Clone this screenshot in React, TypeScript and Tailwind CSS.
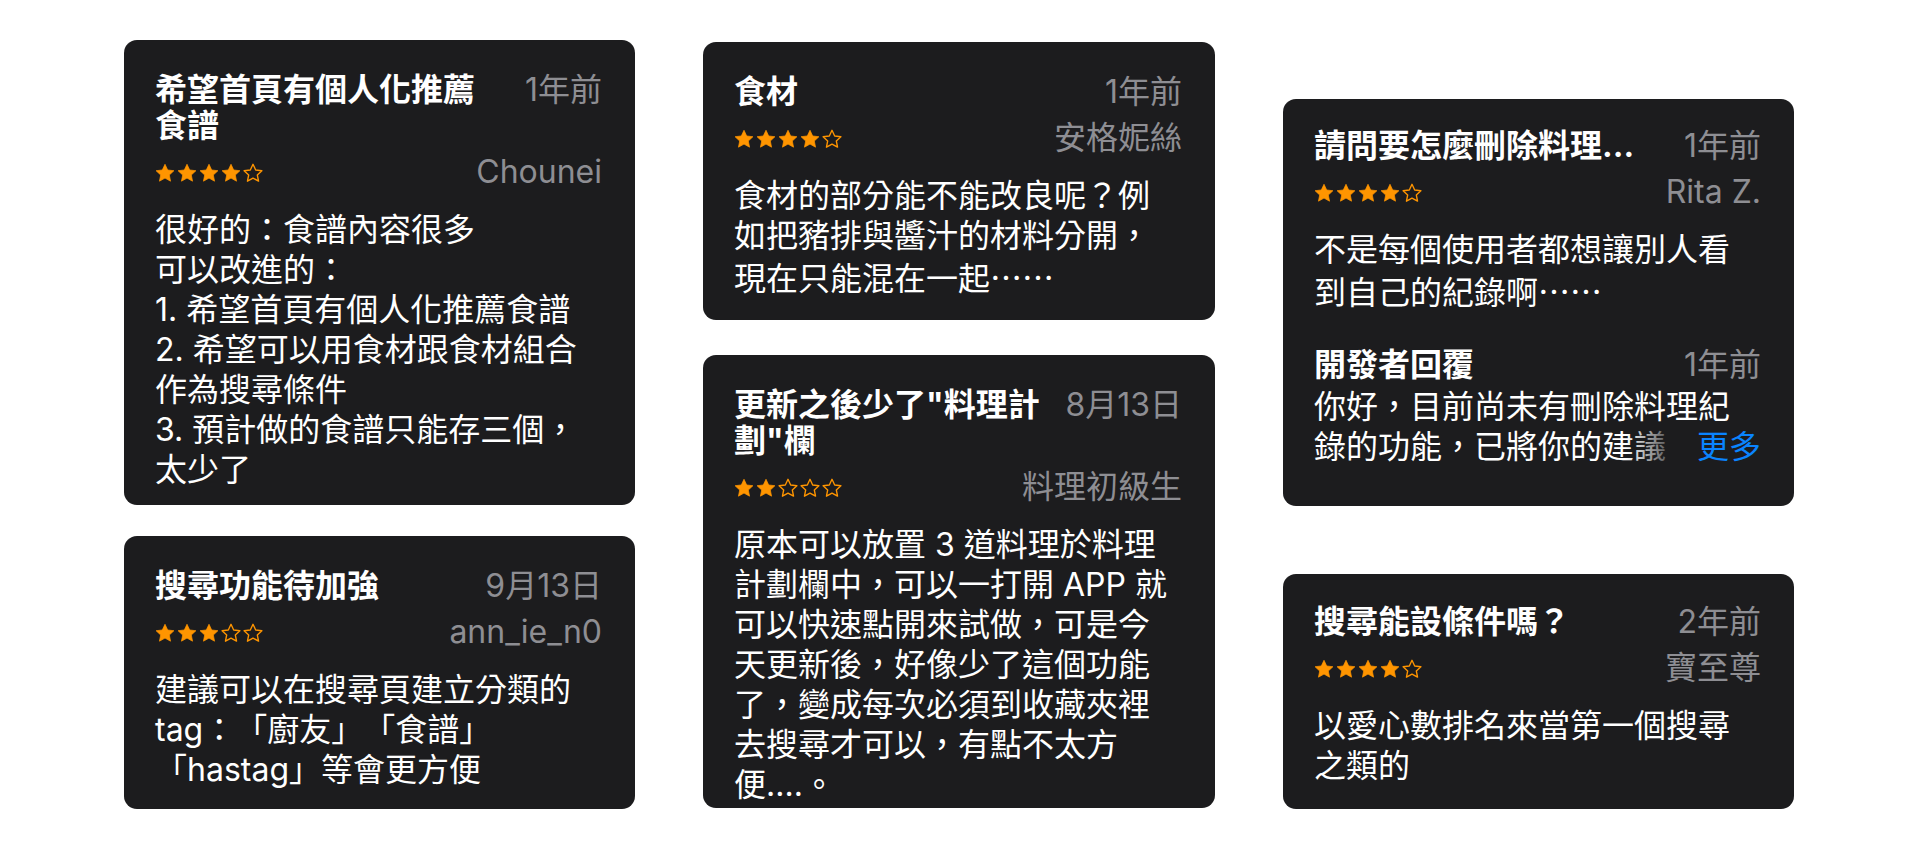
import type { ReactNode } from 'react';

const FONT = "font-['Inter','Noto_Sans_CJK_TC',sans-serif] [text-spacing-trim:space-all]";

function Star({ filled }: { filled: boolean }) {
  return (
    <svg viewBox="1 1.2 22 21.2" className="w-[20px] h-[20px]">
      <path
        d="M12 2.2l2.95 6.25 6.85.85-5.05 4.7 1.35 6.8L12 17.4l-6.1 3.4 1.35-6.8-5.05-4.7 6.85-.85z"
        fill={filled ? '#ff9500' : 'none'}
        stroke="#ff9500"
        strokeWidth={filled ? 0.8 : 1.5}
        strokeLinejoin="round"
      />
    </svg>
  );
}

function Stars({ count }: { count: number }) {
  return (
    <div className="flex items-center gap-[2px] pt-[2px]">
      {[0, 1, 2, 3, 4].map((i) => (
        <Star key={i} filled={i < count} />
      ))}
    </div>
  );
}

const Dots = () => <span className="font-['Noto_Sans_CJK_TC',sans-serif]">⋯⋯</span>;

interface ReviewCardProps {
  height: string;
  top?: string;
  title: ReactNode;
  date: string;
  stars: number;
  author: string;
  lines: ReactNode[];
  children?: ReactNode;
}

function ReviewCard({ height, top = 'pt-[32px]', title, date, stars, author, lines, children }: ReviewCardProps) {
  return (
    <div className={`${height} ${top} bg-[#1c1c1e] rounded-[13px] pl-[31px] pr-[33px] text-[32px] ${FONT}`}>
      <div className="flex items-start justify-between gap-4">
        <div className="text-white font-bold leading-[36px] whitespace-nowrap">{title}</div>
        <div className="text-[#8e8e93] leading-[36px] whitespace-nowrap">{date}</div>
      </div>
      <div className="flex items-center justify-between mt-[10px] h-[36px]">
        <Stars count={stars} />
        <div className="text-[#8e8e93] leading-[36px] whitespace-nowrap">{author}</div>
      </div>
      <div className="mt-[20px] text-white leading-[40px]">
        {lines.map((l, i) => (
          <div key={i} className="whitespace-nowrap">
            {l}
          </div>
        ))}
      </div>
      {children}
    </div>
  );
}

export default function App() {
  return (
    <div className="w-[1920px] h-[850px] bg-white flex pl-[124px] gap-[68px] overflow-hidden">
      <div className="w-[511px] flex flex-col pt-[40px] gap-[31px]">
        <ReviewCard
          height="h-[465px]"
          title={
            <>
              希望首頁有個人化推薦
              <br />
              食譜
            </>
          }
          date="1年前"
          stars={4}
          author="Chounei"
          lines={[
            '很好的：食譜內容很多',
            '可以改進的：',
            '1. 希望首頁有個人化推薦食譜',
            '2. 希望可以用食材跟食材組合',
            '作為搜尋條件',
            '3. 預計做的食譜只能存三個，',
            '太少了',
          ]}
        />
        <ReviewCard
          height="h-[273px]"
          title="搜尋功能待加強"
          date="9月13日"
          stars={3}
          author="ann_ie_n0"
          lines={['建議可以在搜尋頁建立分類的', 'tag：「廚友」「食譜」', '「hastag」等會更方便']}
        />
      </div>

      <div className="w-[512px] flex flex-col pt-[42px] gap-[35px]">
        <ReviewCard
          height="h-[278px]"
          title="食材"
          date="1年前"
          stars={4}
          author="安格妮絲"
          lines={[
            '食材的部分能不能改良呢？例',
            '如把豬排與醬汁的材料分開，',
            <>
              現在只能混在一起
              <Dots />
            </>,
          ]}
        />
        <ReviewCard
          height="h-[453px]"
          title={
            <>
              更新之後少了"料理計
              <br />
              劃"欄
            </>
          }
          date="8月13日"
          stars={2}
          author="料理初級生"
          lines={[
            '原本可以放置 3 道料理於料理',
            '計劃欄中，可以一打開 APP 就',
            '可以快速點開來試做，可是今',
            '天更新後，好像少了這個功能',
            '了，變成每次必須到收藏夾裡',
            '去搜尋才可以，有點不太方',
            '便....。',
          ]}
        />
      </div>

      <div className="w-[511px] flex flex-col pt-[99px] gap-[68px]">
        <ReviewCard
          height="h-[407px]"
          top="pt-[29px]"
          title="請問要怎麼刪除料理..."
          date="1年前"
          stars={4}
          author="Rita Z."
          lines={[
            '不是每個使用者都想讓別人看',
            <>
              到自己的紀錄啊
              <Dots />
            </>,
          ]}
        >
          <div className="mt-[34px] flex items-start justify-between">
            <div className="text-white font-bold leading-[36px]">開發者回覆</div>
            <div className="text-[#8e8e93] leading-[36px]">1年前</div>
          </div>
          <div className="mt-[4px] text-white leading-[40px]">
            <div className="whitespace-nowrap">你好，目前尚未有刪除料理紀</div>
            <div className="flex items-center">
              <div className="relative whitespace-nowrap">
                錄的功能，已將你的建議
                <div className="absolute right-0 top-0 h-full w-[40px] bg-gradient-to-r from-[#1c1c1e]/0 to-[#1c1c1e]/70" />
              </div>
              <div className="ml-auto text-[#0a84ff] whitespace-nowrap">更多</div>
            </div>
          </div>
        </ReviewCard>
        <ReviewCard
          height="h-[235px]"
          top="pt-[30px]"
          title="搜尋能設條件嗎？"
          date="2年前"
          stars={4}
          author="寶至尊"
          lines={['以愛心數排名來當第一個搜尋', '之類的']}
        />
      </div>
    </div>
  );
}
